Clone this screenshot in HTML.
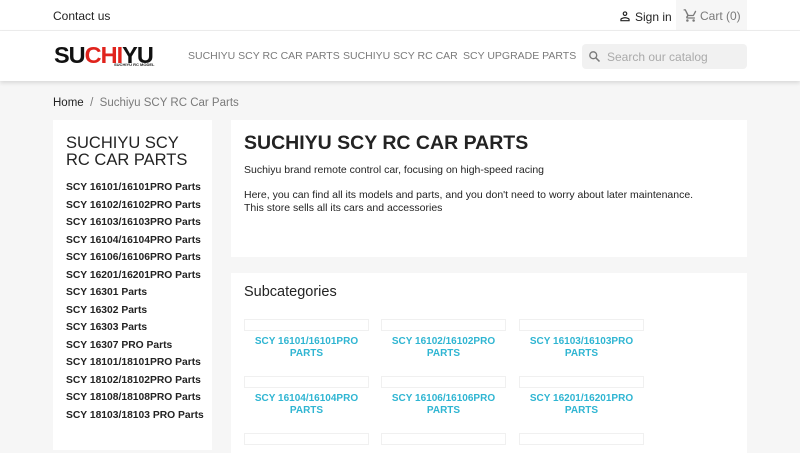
<!DOCTYPE html>
<html><head><meta charset="utf-8"><style>
*{margin:0;padding:0;box-sizing:border-box}
body{width:800px;height:450px;overflow:hidden;background:#f6f6f6;font-family:"Liberation Sans",sans-serif;color:#232323;position:relative}
.a{position:absolute}
.top{left:0;top:0;width:800px;height:31px;background:#fff;border-bottom:1px solid #eee}
.hdr{left:0;top:31px;width:800px;height:50px;background:#fff;box-shadow:0 2px 4px rgba(0,0,0,.12)}
.nav{font-size:10.5px;color:#7a7a7a;top:50px;white-space:nowrap}
.list div{font-size:10.3px;font-weight:bold;height:17.5px;line-height:17.5px;color:#232323;white-space:nowrap}
.panel{background:#fff}
.sc{font-size:10px;font-weight:bold;color:#2fb5d2;text-align:center;width:125px;line-height:11.5px}
.box{width:125px;height:12px;border:1px solid #f0f0f0}
</style></head><body>
<div class="a top"></div>
<div class="a" style="left:53px;top:9px;font-size:12px;color:#232323">Contact us</div>
<svg class="a" style="left:618px;top:9px" width="14" height="14" viewBox="0 0 24 24"><path d="M12 4a4 4 0 1 1 0 8 4 4 0 0 1 0-8zm0 2a2 2 0 1 0 0 4 2 2 0 0 0 0-4zm0 8c2.7 0 8 1.3 8 4v3H4v-3c0-2.7 5.3-4 8-4zm0 2c-3 0-6 1.5-6 2v1h12v-1c0-.5-3-2-6-2z" fill="#232323"/></svg>
<div class="a" style="left:635px;top:10px;font-size:12px">Sign in</div>
<div class="a" style="left:676px;top:0;width:71px;height:30px;background:#f6f6f6"></div>
<svg class="a" style="left:683px;top:8px" width="15" height="15" viewBox="0 0 24 24"><path d="M7 18a2 2 0 1 0 0 4 2 2 0 0 0 0-4zM1 2v2h2l3.6 7.6-1.4 2.4C5 14.3 5 14.6 5 15a2 2 0 0 0 2 2h12v-2H7.4l1.1-2h7.5c.8 0 1.4-.4 1.7-1l3.6-6.5L19.6 4 16 11H9L4.3 2zm16 16a2 2 0 1 0 0 4 2 2 0 0 0 0-4z" fill="#7a7a7a"/></svg>
<div class="a" style="left:700px;top:9px;font-size:12px;color:#7a7a7a">Cart (0)</div>
<div class="a hdr"></div>
<div class="a" style="left:54px;top:42px;font-size:23.5px;font-weight:900;letter-spacing:-1px;color:#111">SU<span style="color:#e0231c">CHI</span>YU</div>
<div class="a" style="left:114px;top:62px;font-size:4px;font-weight:bold">SUCHIYU RC MODEL</div>
<div class="a nav" style="left:188px">SUCHIYU SCY RC CAR PARTS</div>
<div class="a nav" style="left:343px">SUCHIYU SCY RC CAR</div>
<div class="a nav" style="left:463px">SCY UPGRADE PARTS</div>
<div class="a" style="left:582px;top:44px;width:165px;height:25px;background:#f1f1f1;border-radius:4px"></div>
<svg class="a" style="left:587px;top:49px" width="15" height="15" viewBox="0 0 24 24"><circle cx="10" cy="10" r="5.5" stroke="#7a7a7a" stroke-width="2.2" fill="none"/><path d="M14 14l6 6" stroke="#7a7a7a" stroke-width="2.5"/></svg>
<div class="a" style="left:607px;top:50px;font-size:12px;color:#aaa">Search our catalog</div>
<div class="a" style="left:53px;top:97px;font-size:11.5px;color:#232323">Home <span style="color:#7a7a7a">&nbsp;/&nbsp; Suchiyu SCY RC Car Parts</span></div>
<div class="a panel" style="left:53px;top:120px;width:159px;height:330px"></div>
<div class="a" style="left:66px;top:135px;font-size:16.5px;line-height:16.5px;width:140px">SUCHIYU SCY RC CAR PARTS</div>
<div class="a list" style="left:66px;top:179px">
<div>SCY 16101/16101PRO Parts</div><div>SCY 16102/16102PRO Parts</div><div>SCY 16103/16103PRO Parts</div><div>SCY 16104/16104PRO Parts</div><div>SCY 16106/16106PRO Parts</div><div>SCY 16201/16201PRO Parts</div><div>SCY 16301 Parts</div><div>SCY 16302 Parts</div><div>SCY 16303 Parts</div><div>SCY 16307 PRO Parts</div><div>SCY 18101/18101PRO Parts</div><div>SCY 18102/18102PRO Parts</div><div>SCY 18108/18108PRO Parts</div><div>SCY 18103/18103 PRO Parts</div></div>
<div class="a panel" style="left:231px;top:120px;width:516px;height:137px"></div>
<div class="a" style="left:244px;top:131px;font-size:19.5px;line-height:24px;font-weight:bold">SUCHIYU SCY RC CAR PARTS</div>
<div class="a" style="left:244px;top:164px;font-size:10.5px;line-height:12.5px;width:495px;white-space:nowrap">Suchiyu brand remote control car, focusing on high-speed racing<br><br>Here, you can find all its models and parts, and you don't need to worry about later maintenance.<br>This store sells all its cars and accessories</div>
<div class="a panel" style="left:231px;top:273px;width:516px;height:180px"></div>
<div class="a" style="left:244px;top:284px;font-size:14.5px">Subcategories</div>
<div class="a box" style="left:244px;top:319px"></div><div class="a box" style="left:381px;top:319px"></div><div class="a box" style="left:519px;top:319px"></div>
<div class="a sc" style="left:244px;top:336px">SCY 16101/16101PRO PARTS</div>
<div class="a sc" style="left:381px;top:336px">SCY 16102/16102PRO PARTS</div>
<div class="a sc" style="left:519px;top:336px">SCY 16103/16103PRO PARTS</div>
<div class="a box" style="left:244px;top:376px"></div><div class="a box" style="left:381px;top:376px"></div><div class="a box" style="left:519px;top:376px"></div>
<div class="a sc" style="left:244px;top:393px">SCY 16104/16104PRO PARTS</div>
<div class="a sc" style="left:381px;top:393px">SCY 16106/16106PRO PARTS</div>
<div class="a sc" style="left:519px;top:393px">SCY 16201/16201PRO PARTS</div>
<div class="a box" style="left:244px;top:433px"></div><div class="a box" style="left:381px;top:433px"></div><div class="a box" style="left:519px;top:433px"></div>
</body></html>
